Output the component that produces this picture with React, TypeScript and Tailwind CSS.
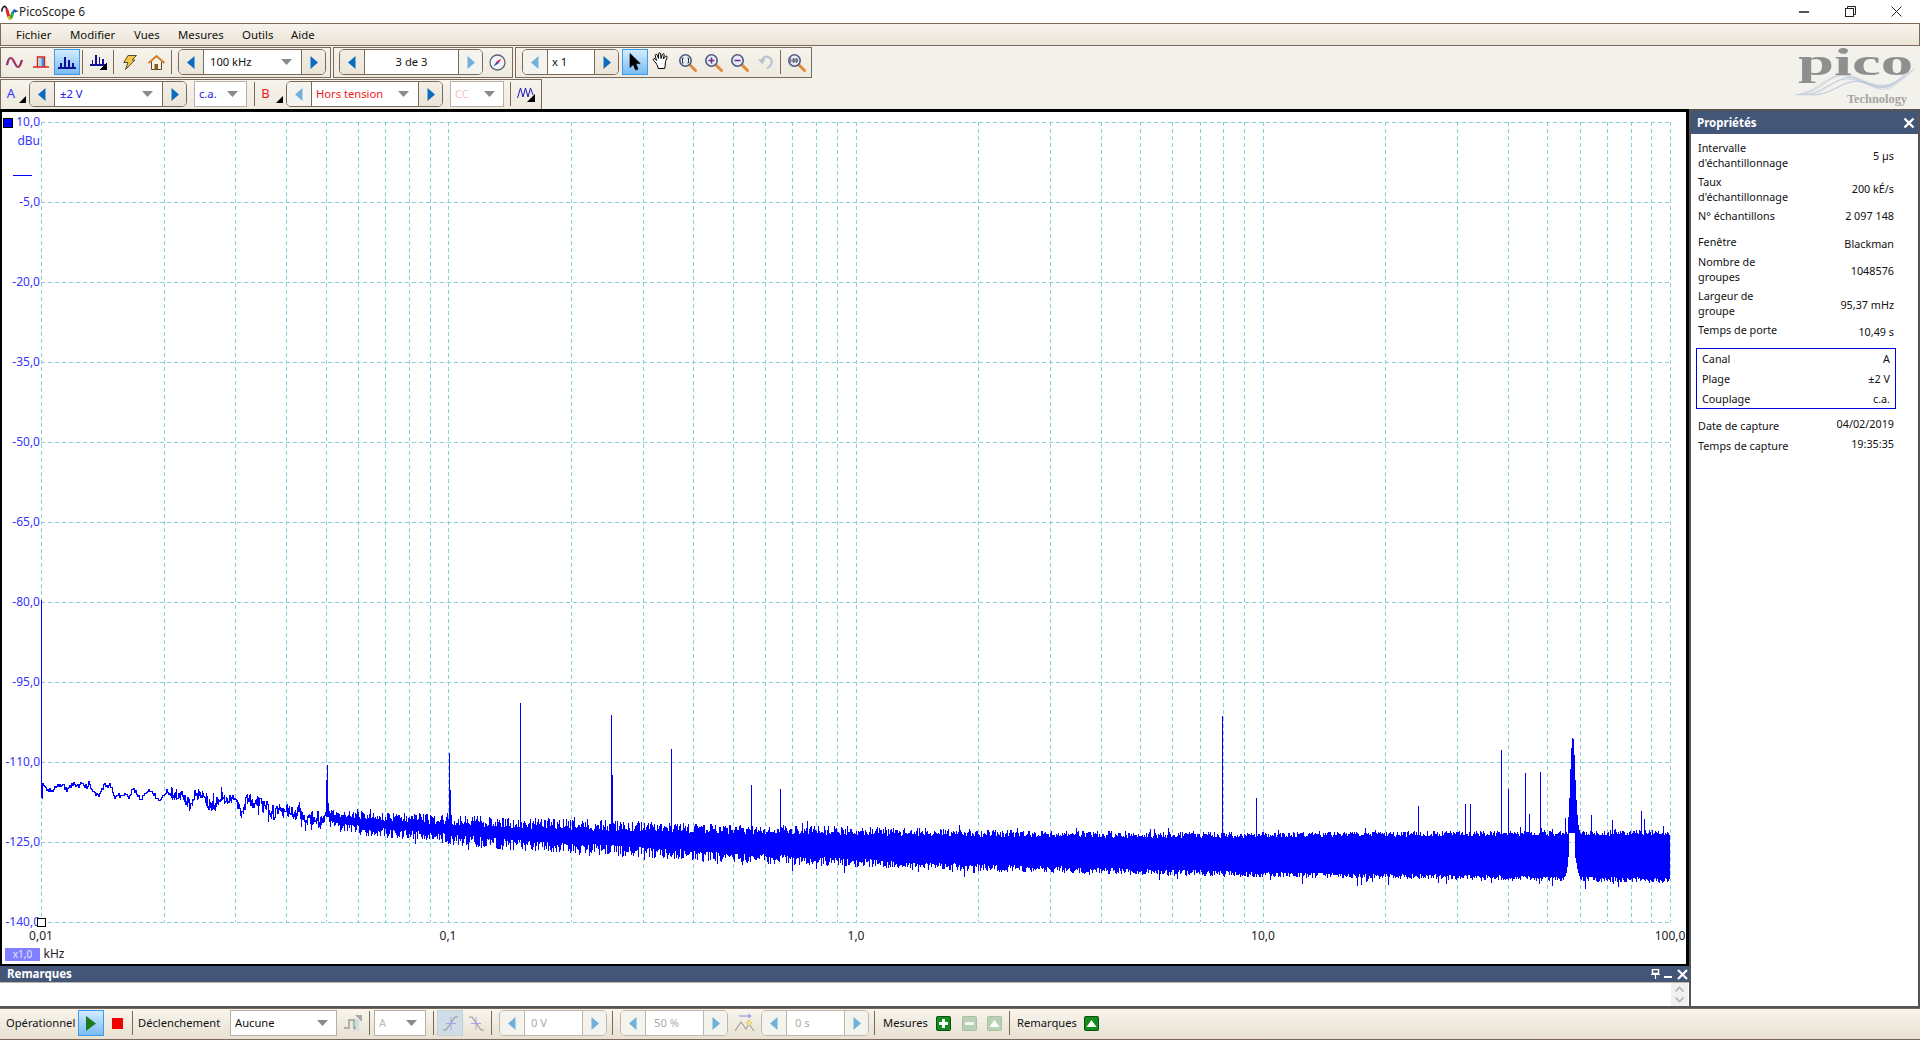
import React from "react";

const BLUE = "#0000ff";
const L = 41, R = 1670, T = 122, B = 922;
const DEC = (R - L) / 4;

function rngFrom(seed: number) {
  let a = seed;
  return () => {
    a |= 0; a = (a + 0x6d2b79f5) | 0;
    let t = Math.imul(a ^ (a >>> 15), 1 | a);
    t = (t + Math.imul(t ^ (t >>> 7), 61 | t)) ^ t;
    return ((t ^ (t >>> 14)) >>> 0) / 4294967296;
  };
}
const lerp = (pts: number[][], x: number) => {
  for (let i = 1; i < pts.length; i++) {
    if (x <= pts[i][0]) {
      const [a, b] = pts[i - 1], [c, d] = pts[i];
      return b + ((d - b) * (x - a)) / (c - a);
    }
  }
  return pts[pts.length - 1][1];
};
const centerPts = [[41, 786], [164, 794], [260, 807], [327, 818], [367, 823], [490, 832], [551, 835], [735, 843], [980, 850], [1225, 854], [1670, 856]];
const halfPts = [[330, 8], [367, 12], [490, 16], [735, 19], [1225, 22], [1670, 26]];
const varPts = [[330, 0.8], [600, 0.65], [900, 0.4], [1300, 0.25], [1670, 0.2]];
const spikes: Record<number, number> = {
  327: 765, 326: 780, 449: 753, 450: 790, 520: 703, 611: 715, 612: 775, 671: 749, 751: 785, 780: 789, 1222: 716, 1256: 798, 1418: 806,
  1465: 804, 1470: 804, 1501: 750, 1508: 789, 1525: 773, 1529: 814, 1540: 772, 1552: 829, 1565: 818, 1591: 815, 1612: 820, 1641: 811, 1644: 819, 1663: 826,
};
const peakTop: Record<number, number> = { 1568: 817, 1569: 798, 1570: 769, 1571: 748, 1572: 738, 1573: 739, 1574: 755, 1575: 780, 1576: 800, 1577: 815, 1578: 825, 1579: 830 };
const peakBottom: Record<number, number> = { 1566: 872, 1567: 866, 1568: 856, 1569: 832, 1570: 832, 1571: 832, 1572: 832, 1573: 832, 1574: 832, 1575: 857, 1576: 862, 1577: 868, 1578: 872, 1579: 875, 1580: 878 };

function spectrumPath() {
  const r = rngFrom(20190204);
  let d = `M41.5 600V798`;
  let prev = 798;
  let w0 = r() - 0.5, w1 = r() - 0.5, wi = 0, wn = 6;
  for (let x = 42; x < R; x++) {
    const c = lerp(centerPts, x);
    let top: number, bottom: number;
    if (x < 330) {
      wi++;
      if (wi >= wn) { w0 = w1; w1 = r() - 0.5; wi = 0; wn = 3 + Math.floor(r() * 6); }
      const slow = w0 + ((w1 - w0) * wi) / wn;
      const amp = x < 170 ? 2.5 : x < 260 ? 5 : 7;
      const y = c + slow * 14 + (r() - 0.5) * 2 * amp;
      top = Math.min(y, prev);
      bottom = Math.max(y, prev);
      if (x > 170 && r() < 0.5) { top -= r() * 3; bottom += r() * 3; }
      prev = y;
      if (x > 200 && r() < 0.03) bottom += 8 * r() + 3;
      if (x > 200 && r() < 0.03) top -= 5 * r() + 2;
    } else {
      const h = lerp(halfPts, x), v = lerp(varPts, x);
      top = c - h * (1 - v + v * r()) - (r() < 0.05 ? 6 * r() : 0);
      bottom = c + h * (1 - v + v * r()) + (r() < 0.06 ? 8 * r() : 0);
    }
    if (spikes[x]) top = spikes[x];
    if (peakTop[x]) top = peakTop[x];
    if (peakBottom[x]) bottom = peakBottom[x];
    d += `M${x}.5 ${Math.round(top)}V${Math.round(bottom) + 1}`;
  }
  return d;
}
const SPECTRUM = spectrumPath();

const vGrid: number[] = [];
for (let dec = 0; dec < 4; dec++) for (let m = 1; m < 10; m++) vGrid.push(Math.round(L + DEC * (dec + Math.log10(m))));
vGrid.push(R);
const hLabels = ["10,0", "-5,0", "-20,0", "-35,0", "-50,0", "-65,0", "-80,0", "-95,0", "-110,0", "-125,0", "-140,0"];

function Plot() {
  return (
    <div className="w-[1689px] h-[857px] shrink-0 bg-white border-l-2 border-r-[3px] border-t-[3px] border-b-2 border-black">
      <svg width="1684" height="852" viewBox="2 112 1684 852" className="block font-['Noto_Sans'] text-[12px]">
        <g stroke="#88cedd" strokeWidth="1" strokeDasharray="4 3" shapeRendering="crispEdges">
          {hLabels.map((_, i) => <line key={i} x1={L} x2={R} y1={T + i * 80 + 0.5} y2={T + i * 80 + 0.5} />)}
          {vGrid.map((x) => <line key={x} x1={x + 0.5} x2={x + 0.5} y1={T} y2={B} />)}
        </g>
        <path d={SPECTRUM} stroke={BLUE} strokeWidth="1" fill="none" shapeRendering="crispEdges" />
        <g fill="#3535ff" textAnchor="end">
          {hLabels.map((t, i) => <text key={t} x="40" y={T + i * 80 + 4}>{t}</text>)}
          <text x="40" y="145">dBu</text>
        </g>
        <rect x="3.5" y="118.5" width="9" height="9" fill={BLUE} stroke="#000" />
        <rect x="13" y="175" width="19" height="1" fill={BLUE} />
        <rect x="37.5" y="918.5" width="8" height="8" fill="#fff" stroke="#000" />
        <g fill="#222" textAnchor="middle">
          <text x="41" y="940">0,01</text>
          <text x="448" y="940">0,1</text>
          <text x="856" y="940">1,0</text>
          <text x="1263" y="940">10,0</text>
          <text x="1670" y="940">100,0</text>
          <text x="54" y="958">kHz</text>
        </g>
        <rect x="5" y="948" width="35" height="13" fill="#7f7fff" />
        <text x="22.5" y="958" textAnchor="middle" fill="#e6e6ff" className="text-[10px]">x1,0</text>
      </svg>
    </div>
  );
}

const TriL = ({ off }: { off?: boolean }) => (
  <svg width="8" height="13" viewBox="0 0 8 13"><path d="M7.5 0V13L0 6.5Z" fill={off ? "#6fb0dc" : "#0a6cc0"} /></svg>
);
const TriR = ({ off }: { off?: boolean }) => (
  <svg width="8" height="13" viewBox="0 0 8 13"><path d="M0.5 0V13L8 6.5Z" fill={off ? "#6fb0dc" : "#0a6cc0"} /></svg>
);
const Down = () => (
  <svg width="11" height="6" viewBox="0 0 11 6"><path d="M0 0H11L5.5 6Z" fill="#8a8a8a" /></svg>
);
const Corner = () => (
  <svg width="7" height="7" viewBox="0 0 7 7" className="absolute right-[3px] bottom-[5px]"><path d="M7 0V7H0Z" fill="#000" /></svg>
);

function Nav({ className, leftOff, rightOff, muted, children }: { className: string; leftOff?: boolean; rightOff?: boolean; muted?: boolean; children: React.ReactNode }) {
  const line = muted ? "border-[#bdb7ad]" : "border-[#7a6a5c]";
  return (
    <div className={`${className} flex shrink-0 border rounded-[5px] overflow-hidden ${line}`}>
      <div className={`w-[25px] shrink-0 flex items-center justify-center border-r ${line} ${leftOff ? "bg-[#f5f3ee]" : "bg-linear-to-b from-[#f3efe6] to-[#ebe5d8]"}`}><TriL off={leftOff} /></div>
      <div className="flex-1 min-w-0 bg-white flex items-center">{children}</div>
      <div className={`w-[24px] shrink-0 flex items-center justify-center border-l ${line} ${rightOff ? "bg-[#f5f3ee]" : "bg-linear-to-b from-[#f3efe6] to-[#ebe5d8]"}`}><TriR off={rightOff} /></div>
    </div>
  );
}
const Sep = ({ className = "" }: { className?: string }) => <div className={`${className} w-px h-[24px] shrink-0 bg-[#7a6a5c]`} />;
const Cell = ({ className, children }: { className: string; children?: React.ReactNode }) => (
  <div className={`${className} relative h-full shrink-0 flex items-center justify-center`}>{children}</div>
);
const Active = ({ className = "", children }: { className?: string; children: React.ReactNode }) => (
  <div className={`${className} w-[26px] h-[26px] shrink-0 flex items-center justify-center border border-[#3f9bea] bg-linear-to-b from-[#d4ebfd] to-[#77bbf3]`}>{children}</div>
);
function Combo({ className, text, color, line = "border-[#b8b0a5]" }: { className: string; text: string; color: string; line?: string }) {
  return (
    <div className={`${className} h-[26px] shrink-0 bg-white border ${line} flex items-center justify-between pl-[4px] pr-[8px]`}>
      <span className={color}>{text}</span>
      <Down />
    </div>
  );
}

const Sine = () => (
  <svg width="17" height="11" viewBox="0 0 17 11" fill="none" strokeWidth="1.3">
    <path d="M0.5 8C2.5 -1 5 -1 8 5.5S13 12 15.5 3" stroke="#2540c8" />
    <path d="M1.5 8C3.5 -1 6 -1 9 5.5S14 12 16.5 3" stroke="#d8232a" />
  </svg>
);
const Pulse = () => (
  <svg width="16" height="12" viewBox="0 0 16 12" fill="none">
    <rect x="6" y="1.5" width="2.5" height="9" fill="#8fe0ea" />
    <rect x="8.5" y="1.5" width="2.5" height="9" fill="#3f8fd8" />
    <path d="M0 11H11.5M16 11H11.5V1H4.5V11" stroke="#e01e1e" strokeWidth="1.4" />
  </svg>
);
const Bars = () => (
  <svg width="18" height="13" viewBox="0 0 18 13" shapeRendering="crispEdges">
    <rect y="11" width="18" height="1.5" fill="#10109a" />
    <path d="M2 11V7H3.6V11ZM6 11V1H7.8V11ZM10 11V4H11.8V11ZM14 11V7H15.6V11Z" fill="#10109a" />
  </svg>
);
const BarsCorner = () => (
  <svg width="17" height="16" viewBox="0 0 17 16" shapeRendering="crispEdges">
    <rect y="10" width="15" height="1.5" fill="#10109a" />
    <path d="M1.5 10V6H3V10ZM5 10V0.5H6.6V10ZM8.5 10V3H10V10ZM12 10V5H13.5V10Z" fill="#10109a" />
    <path d="M17 8V16H9Z" fill="#000" />
  </svg>
);
const Bolt = () => (
  <svg width="14" height="15" viewBox="0 0 14 15"><path d="M5 0.5H13.5L9 5H12L2.5 14.5L5 7.5H0.8Z" fill="#f2c84a" stroke="#5a4a2a" strokeWidth="1" /></svg>
);
const Home = () => (
  <svg width="17" height="15" viewBox="0 0 17 15"><path d="M3.5 6.5V14.5H13.5V6.5" fill="#fbf3df" stroke="#5b4a2a" /><rect x="6.5" y="9" width="3.5" height="5.5" fill="#8a5a24" /><path d="M0.5 8L8.5 1L16.5 8" fill="none" stroke="#d07a1e" strokeWidth="1.8" /></svg>
);
const Compass = () => (
  <svg width="17" height="17" viewBox="0 0 17 17"><circle cx="8.5" cy="8.5" r="7.5" fill="#f4f6fb" stroke="#5c6478" strokeWidth="1.3" /><path d="M12.5 4.5L9.5 9.5L7.5 7.5Z" fill="#e0242a" /><path d="M4.5 12.5L7.5 7.5L9.5 9.5Z" fill="#2850c8" /></svg>
);
const Arrow = () => (
  <svg width="12" height="18" viewBox="0 0 12 18"><path d="M1 0.5V14.5L4.3 11.5L6.6 17L9 16L6.8 10.6H11.2Z" fill="#000" stroke="#000" strokeWidth="0.7" /></svg>
);
const HandIcon = () => (
  <svg width="18" height="20" viewBox="0 0 18 20" fill="#fff" stroke="#000" strokeWidth="1" strokeLinejoin="round">
    <path d="M4 11L1.5 8.3C0.7 7.2 2 6 3 6.8L4.5 8.5L3.2 3.5C3 2.2 4.8 1.8 5.2 3L6.5 6.5L6.6 1.8C6.7 0.5 8.6 0.5 8.6 1.8L9 6.5L10.4 2.4C10.8 1.2 12.5 1.7 12.2 3L11.3 7L13.5 4.4C14.4 3.5 15.8 4.5 15 5.6L13.5 9.5C13 12 13.5 14 12.8 16.5H6.2C6 14.5 5 13 4 11Z" />
  </svg>
);
const Glass = ({ mark }: { mark: React.ReactNode }) => (
  <svg width="19" height="19" viewBox="0 0 19 19" fill="none">
    <path d="M11 11L17.5 17.5" stroke="#e08a3c" strokeWidth="3" strokeLinecap="round" />
    <circle cx="7.5" cy="7.5" r="5.7" fill="#e6edf8" stroke="#4c5a80" strokeWidth="1.6" />
    {mark}
  </svg>
);
const UndoIcon = () => (
  <svg width="17" height="16" viewBox="0 0 17 16" fill="none" stroke="#b9c3d2" strokeWidth="2.2"><path d="M5 9C4 4 8 2 11 3C15 4 16 9 13 12L10 14.5" /><path d="M1 5.5L5.5 10.5L8.5 4.5Z" fill="#b9c3d2" stroke="none" /></svg>
);
const WaveCorner = () => (
  <svg width="18" height="16" viewBox="0 0 18 16"><path d="M0.5 12L3.5 2L6 11L8.5 2L11 11L13.5 2L16 9" fill="none" stroke="#1a1ab0" strokeWidth="1" /><path d="M18 8V16H10Z" fill="#000" /></svg>
);
const Play = () => <svg width="10" height="15" viewBox="0 0 10 15"><path d="M0 0L10 7.5L0 15Z" fill="#1d7a20" /></svg>;
const TriggerIcon = () => (
  <svg width="18" height="18" viewBox="0 0 18 18" fill="none"><rect x="9" y="5" width="6" height="12" fill="#d4dde4" /><path d="M0 14H5V6H10V14H12" stroke="#9a9a9a" strokeWidth="1.4" /><path d="M11 1H18V8Z" fill="#a8a8a8" /><circle cx="10" cy="10" r="1.6" fill="#9fd49f" /></svg>
);
const Edge = ({ falling }: { falling?: boolean }) => (
  <svg width="15" height="15" viewBox="0 0 15 15" fill="none" className={falling ? "-scale-x-100" : ""}><path d="M0 14H3L12 1H15" stroke="#9a9a9a" strokeWidth="1.2" /><path d="M8 1V14M3 7.5H13" stroke="#a6a4e8" strokeWidth="1" /></svg>
);
const DelayIcon = () => (
  <svg width="20" height="20" viewBox="0 0 20 20" fill="none"><path d="M4 3H16M13 1L16 3L13 5" stroke="#8b86e0" /><path d="M0 18L6 9L11 16L14 11L19 18" stroke="#a0a0a0" strokeWidth="1.2" /><path d="M14 7L17 10L14 13L11 10Z" fill="#f0e58a" stroke="#c8b860" strokeWidth="0.6" /></svg>
);
const GreenBtn = ({ off, kind }: { off?: boolean; kind: "plus" | "minus" | "up" }) => (
  <svg width="15" height="15" viewBox="0 0 15 15">
    <rect x="0.5" y="0.5" width="14" height="14" rx="1" fill={off ? "#b9d0b4" : "#128c1c"} stroke={off ? "#a9bfa5" : "#0a4f10"} />
    {kind === "plus" && <path d="M6 3H9V6H12V9H9V12H6V9H3V6H6Z" fill="#fff" />}
    {kind === "minus" && <rect x="3" y="6" width="9" height="3" fill="#f2f7f0" />}
    {kind === "up" && <path d="M2.5 11L7.5 4L12.5 11Z" fill="#fff" />}
  </svg>
);
const AppIcon = () => (
  <svg width="17" height="18" viewBox="0 0 17 18" fill="none" strokeLinecap="round">
    <path d="M0.8 8C2 2 4.5 2 6 7" stroke="#222" strokeWidth="1.6" />
    <path d="M6 7C6.5 9 7 11 7.6 13" stroke="#d8262a" strokeWidth="3" />
    <path d="M8 14.5C8.5 16 9 16 9.5 15" stroke="#e6c020" strokeWidth="3" />
    <path d="M10.4 14C11 12 11.3 11 11.6 10" stroke="#2aa838" strokeWidth="3" />
    <path d="M12.4 9C13 7 13.5 7 14 8" stroke="#2a70d0" strokeWidth="2.4" />
    <path d="M14.5 8.5C15 8 15.5 8 16.5 8" stroke="#222" strokeWidth="1.2" />
  </svg>
);
const Logo = () => (
  <svg width="124" height="60" viewBox="0 0 124 60" className="overflow-visible font-['Liberation_Serif']">
    <g fill="none" stroke="#b7c6da" strokeWidth="0.7" transform="translate(0 5)">
      <path d="M0 43C25 40 32 20 52 24S85 44 102 30" />
      <path d="M3 43C28 40 36 18 56 24S86 42 106 26" />
      <path d="M6 43C30 42 40 22 60 28S90 42 110 22" />
      <path d="M10 43C34 42 44 18 64 28S92 40 114 20" />
      <path d="M14 43C38 44 48 26 68 30S94 38 118 18" />
      <path d="M18 43C42 42 52 22 72 32S96 38 120 16" />
    </g>
    <text x="3" y="28" fontSize="38" fontWeight="700" fill="#8f8f8f" textLength="115" lengthAdjust="spacingAndGlyphs">pico</text>
    <text x="52" y="56" fontSize="12" fontWeight="700" fill="#a5a5a5" textLength="60" lengthAdjust="spacingAndGlyphs">Technology</text>
  </svg>
);

const Group = ({ className, children }: { className: string; children: React.ReactNode }) => (
  <div className={`${className} h-full shrink-0 flex items-center pb-px border border-[#7a6a5c] bg-linear-to-b from-[#f6f3ec] to-[#efeadf]`}>{children}</div>
);

function Row({ lines, value, valueClass = "" }: { lines: string[]; value: string; valueClass?: string }) {
  return (
    <div className="flex items-center justify-between leading-[15px]">
      <div>{lines.map((l) => <div key={l}>{l}</div>)}</div>
      <div className={valueClass}>{value}</div>
    </div>
  );
}

function Properties() {
  return (
    <div className="flex-1 bg-white border-t-2 border-l-2 border-r-2 border-[#555555] flex flex-col text-[10.8px] text-[#111]">
      <div className="h-[23px] shrink-0 bg-[#435678] flex items-center justify-between pl-[6px] pr-[3px] text-white font-bold text-[11.5px]">
        <span>Propriétés</span>
        <svg width="12" height="12" viewBox="0 0 12 12"><path d="M1.5 1.5L10.5 10.5M10.5 1.5L1.5 10.5" stroke="#fff" strokeWidth="2.4" /></svg>
      </div>
      <div className="pl-[7px] pr-[24px] pt-[6px] flex flex-col">
        <Row lines={["Intervalle", "d'échantillonnage"]} value="5 µs" />
        <div className="mt-[4px]"><Row lines={["Taux", "d'échantillonnage"]} value="200 kÉ/s" valueClass="-translate-y-px" /></div>
        <div className="mt-[4px]"><Row lines={["N° échantillons"]} value="2 097 148" /></div>
        <div className="mt-[11px]"><Row lines={["Fenêtre"]} value="Blackman" valueClass="translate-y-[2px]" /></div>
        <div className="mt-[5px]"><Row lines={["Nombre de", "groupes"]} value="1048576" valueClass="translate-y-px" /></div>
        <div className="mt-[4px]"><Row lines={["Largeur de", "groupe"]} value="95,37 mHz" valueClass="translate-y-px" /></div>
        <div className="mt-[4px]"><Row lines={["Temps de porte"]} value="10,49 s" valueClass="translate-y-[2px]" /></div>
        <div className="mt-[11px] -ml-[2px] -mr-[2px] h-[61px] border border-[#0000e0] px-[5px] flex flex-col justify-center gap-[5px]">
          <Row lines={["Canal"]} value="A" />
          <Row lines={["Plage"]} value="±2 V" />
          <Row lines={["Couplage"]} value="c.a." />
        </div>
        <div className="mt-[9px]"><Row lines={["Date de capture"]} value="04/02/2019" valueClass="-translate-y-[2px]" /></div>
        <div className="mt-[5px]"><Row lines={["Temps de capture"]} value="19:35:35" valueClass="-translate-y-[2px]" /></div>
      </div>
    </div>
  );
}

export default function App() {
  return (
    <div className="w-[1920px] h-[1040px] overflow-hidden flex flex-col bg-[#f3f1ec] font-['Noto_Sans','DejaVu_Sans',sans-serif] text-[11.2px] text-[#111]">
      <div className="h-[23px] shrink-0 bg-white flex items-center">
        <div className="ml-[1px] w-[18px] flex"><AppIcon /></div>
        <span className="text-[11.8px] text-[#222]">PicoScope 6</span>
        <div className="ml-auto flex items-center h-full">
          <div className="w-[46px] flex justify-center"><svg width="10" height="2"><rect width="10" height="2" fill="#555" /></svg></div>
          <div className="w-[46px] flex justify-center"><svg width="11" height="11" viewBox="0 0 11 11" fill="none" stroke="#222"><path d="M2.5 2.5V0.5H10.5V8.5H8.5" /><rect x="0.5" y="2.5" width="8" height="8" /></svg></div>
          <div className="w-[46px] flex justify-center"><svg width="11" height="11" viewBox="0 0 11 11" stroke="#222"><path d="M0.5 0.5L10.5 10.5M10.5 0.5L0.5 10.5" /></svg></div>
          <div className="w-[1px]" />
        </div>
      </div>
      <div className="h-[23px] shrink-0 border border-[#7a6a5c] bg-linear-to-b from-[#f8f4ed] to-[#ebe4d6] flex items-center pl-[15px] text-[11.4px]">
        <span className="w-[54px]">Fichier</span>
        <span className="w-[64px]">Modifier</span>
        <span className="w-[44px]">Vues</span>
        <span className="w-[64px]">Mesures</span>
        <span className="w-[49px]">Outils</span>
        <span>Aide</span>
      </div>
      <div className="h-[63px] shrink-0 flex">
        <div className="flex flex-col pt-px gap-px">
          <div className="h-[31px] flex gap-[3px]">
            <Group className="w-[331px]">
              <Cell className="w-[26px]"><Sine /></Cell>
              <Cell className="w-[27px]"><Pulse /></Cell>
              <Active><Bars /></Active>
              <Sep className="ml-[2px]" />
              <Cell className="w-[30px]"><BarsCorner /></Cell>
              <Sep />
              <Cell className="w-[32px]"><Bolt /></Cell>
              <Cell className="w-[20px]"><Home /></Cell>
              <Sep className="ml-[5px]" />
              <Nav className="ml-[6px] w-[148px] h-[26px]">
                <div className="flex items-center justify-between w-full pl-[6px] pr-[9px]"><span>100 kHz</span><Down /></div>
              </Nav>
            </Group>
            <div className="-ml-px h-full flex gap-[2px]">
              <Group className="w-[180px]">
                <Nav className="ml-[5px] w-[144px] h-[26px]" rightOff>
                  <div className="w-full text-center">3 de 3</div>
                </Nav>
                <Cell className="w-[28px]"><Compass /></Cell>
              </Group>
              <Group className="w-[297px]">
                <Nav className="ml-[6px] w-[97px] h-[26px]" leftOff>
                  <div className="w-full pl-[4px]">x 1</div>
                </Nav>
                <Active className="ml-[3px]"><Arrow /></Active>
                <Cell className="w-[26px]"><HandIcon /></Cell>
                <Cell className="w-[26px]"><Glass mark={<path d="M5.5 5H4.5V10H5.5M9.5 5H10.5V10H9.5" stroke="#333" />} /></Cell>
                <Cell className="w-[26px]"><Glass mark={<path d="M7.5 4.5V10.5M4.5 7.5H10.5" stroke="#7b2a8a" strokeWidth="1.6" />} /></Cell>
                <Cell className="w-[26px]"><Glass mark={<path d="M4.5 7.5H10.5" stroke="#7b2a8a" strokeWidth="1.6" />} /></Cell>
                <Cell className="w-[26px]"><UndoIcon /></Cell>
                <Sep className="ml-[2px]" />
                <Cell className="w-[30px]"><Glass mark={<path d="M3.8 5.5V9.5M6 5.8H7.2V9.2H6ZM9 5.8H10.2V9.2H9Z" stroke="#333" strokeWidth="0.9" />} /></Cell>
              </Group>
            </div>
          </div>
          <div className="h-[30px] flex">
            <Group className="w-[542px] border-b-0">
              <Cell className="w-[28px]"><span className="mr-[8px] text-[13px] text-[#3535ff]">A</span><Corner /></Cell>
              <Nav className="w-[158px] h-[26px]">
                <div className="flex items-center justify-between w-full pl-[5px] pr-[9px] text-[#2020e0]"><span>±2 V</span><Down /></div>
              </Nav>
              <Combo className="ml-[7px] w-[53px]" text="c.a." color="text-[#2020e0]" />
              <Sep className="ml-[7px]" />
              <Cell className="w-[31px]"><span className="mr-[10px] text-[13px] text-[#f01818]">B</span><Corner /></Cell>
              <Nav className="w-[157px] h-[26px]" leftOff>
                <div className="flex items-center justify-between w-full pl-[4px] pr-[9px] text-[#f01818]"><span>Hors tension</span><Down /></div>
              </Nav>
              <Combo className="ml-[7px] w-[54px]" text="CC" color="text-[#f6c0c0]" />
              <Sep className="ml-[6px]" />
              <Cell className="w-[30px]"><WaveCorner /></Cell>
            </Group>
          </div>
        </div>
        <div className="ml-auto pt-[1px] pr-[1px]"><Logo /></div>
      </div>
      <div className="h-[897px] shrink-0 flex">
        <div className="w-[1689px] shrink-0 flex flex-col">
          <Plot />
          <div className="h-[16px] shrink-0 bg-[#435678] flex items-center justify-between pl-[7px] pr-[1px] text-white font-bold text-[11.5px]">
            <span>Remarques</span>
            <div className="flex items-center gap-[4px]">
              <svg width="9" height="10" viewBox="0 0 9 10" fill="none" stroke="#fff"><rect x="1.5" y="0.5" width="6" height="4" fill="#435678" strokeWidth="1.5" /><path d="M0 5.5H9M4.5 5.5V10" strokeWidth="1.2" /></svg>
              <svg width="9" height="10" viewBox="0 0 9 10"><rect y="7" width="8" height="2" fill="#fff" /></svg>
              <svg width="11" height="11" viewBox="0 0 11 11"><path d="M1 1L10 10M10 1L1 10" stroke="#fff" strokeWidth="2.2" /></svg>
            </div>
          </div>
          <div className="flex-1 bg-white border-t border-[#bdb5a8] flex justify-end">
            <div className="w-[17px] mr-[1px] bg-[#f0f0f0] flex flex-col items-center justify-between py-[3px]">
              <svg width="9" height="6" viewBox="0 0 9 6" fill="none" stroke="#b5b5b5" strokeWidth="1.6"><path d="M0.5 5.5L4.5 1.5L8.5 5.5" /></svg>
              <svg width="9" height="6" viewBox="0 0 9 6" fill="none" stroke="#b5b5b5" strokeWidth="1.6"><path d="M0.5 0.5L4.5 4.5L8.5 0.5" /></svg>
            </div>
          </div>
        </div>
        <Properties />
      </div>
      <div className="h-[2px] shrink-0 bg-[#555555]" />
      <div className="h-[32px] shrink-0 flex items-center pb-[2px] border-t border-b border-[#7a6a5c] bg-linear-to-b from-[#f8f5ee] to-[#e8e1d1]">
        <div className="ml-[6px] w-[72px] shrink-0">Opérationnel</div>
        <Active><Play /></Active>
        <Cell className="w-[27px]"><div className="w-[11px] h-[11px] bg-[#f00000]" /></Cell>
        <Sep className="ml-[1px]" />
        <div className="ml-[5px] w-[92px] shrink-0">Déclenchement</div>
        <Combo className="w-[107px]" text="Aucune" color="text-[#111]" />
        <Cell className="w-[32px]"><TriggerIcon /></Cell>
        <Sep />
        <Combo className="ml-[4px] w-[52px]" text="A" color="text-[#bbbbbb]" />
        <Sep className="ml-[7px]" />
        <div className="ml-[3px] w-[26px] h-[26px] shrink-0 flex items-center justify-center bg-[#cfdde6] border border-[#c2d0da]"><Edge /></div>
        <Cell className="w-[27px]"><Edge falling /></Cell>
        <Sep className="ml-[1px]" />
        <Nav className="ml-[7px] w-[108px] h-[26px]" muted leftOff rightOff><span className="pl-[6px] text-[#aaaaaa]">0 V</span></Nav>
        <Sep className="ml-[5px]" />
        <Nav className="ml-[7px] w-[108px] h-[26px]" muted leftOff rightOff><span className="pl-[8px] text-[#aaaaaa]">50 %</span></Nav>
        <Cell className="w-[33px]"><DelayIcon /></Cell>
        <Nav className="w-[108px] h-[26px]" muted leftOff rightOff><span className="pl-[8px] text-[#aaaaaa]">0 s</span></Nav>
        <Sep className="ml-[5px]" />
        <div className="ml-[8px] w-[51px] shrink-0">Mesures</div>
        <Cell className="w-[18px]"><GreenBtn kind="plus" /></Cell>
        <Cell className="ml-[8px] w-[18px]"><GreenBtn off kind="minus" /></Cell>
        <Cell className="ml-[7px] w-[18px]"><GreenBtn off kind="up" /></Cell>
        <Sep className="ml-[6px]" />
        <div className="ml-[7px] w-[65px] shrink-0">Remarques</div>
        <Cell className="w-[18px]"><GreenBtn kind="up" /></Cell>
      </div>
    </div>
  );
}
